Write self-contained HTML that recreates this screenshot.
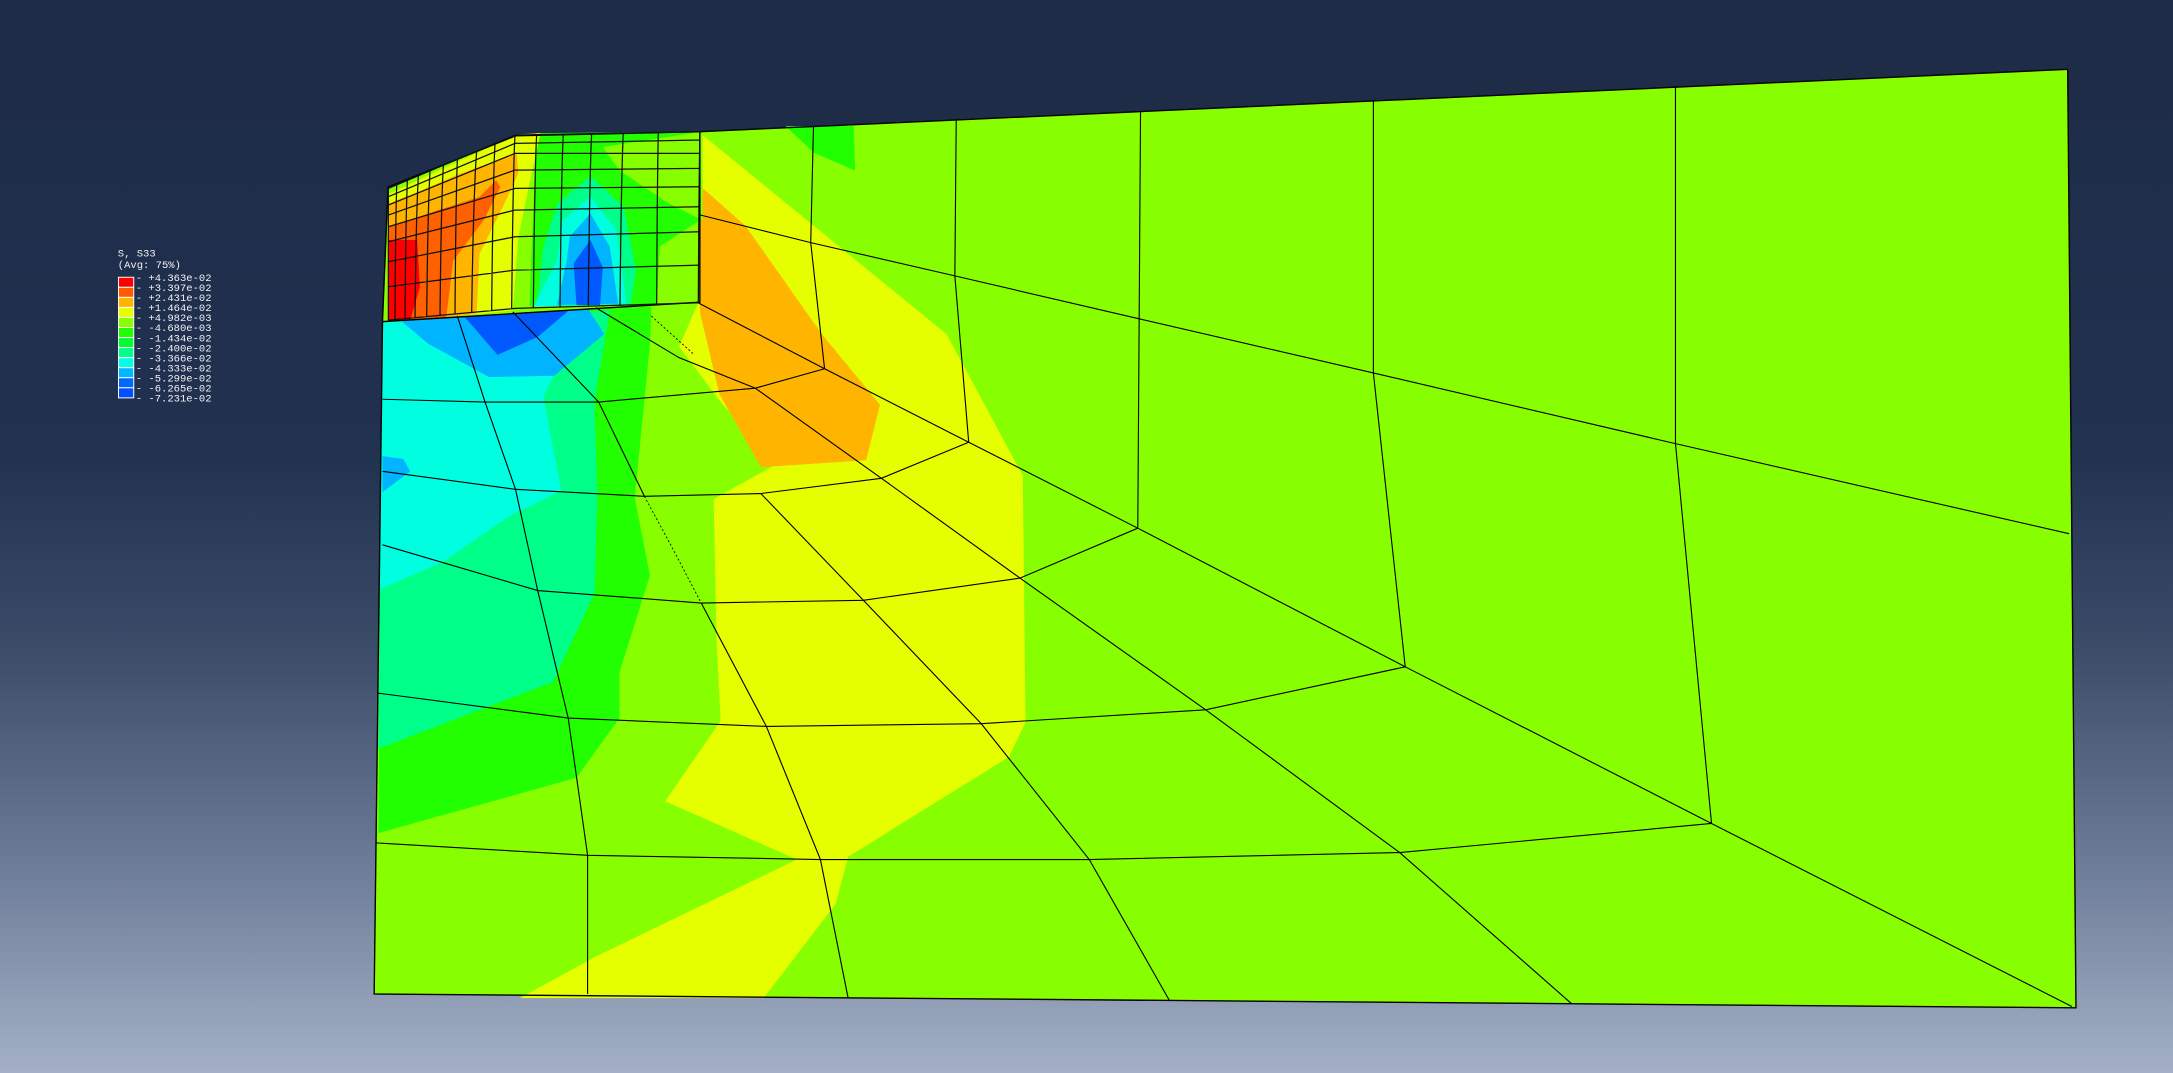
<!DOCTYPE html>
<html><head><meta charset="utf-8">
<style>
html,body{margin:0;padding:0;width:2173px;height:1073px;overflow:hidden;}
body{background:linear-gradient(to bottom,#1d2b46 0%,#213150 42%,#3a4b68 60%,#6b7a96 80%,#a3b0c6 100%);}
svg{display:block;}
text{font-family:"Liberation Mono","DejaVu Sans Mono",monospace;fill:#f2f2f2;font-size:7.6px;}
</style></head><body>
<svg id="s" width="2173" height="1073" viewBox="0 0 1568 774" preserveAspectRatio="none" xmlns="http://www.w3.org/2000/svg">
<!-- body -->
<polygon points="270,717 276,232 280,135 372,98 505,95 1492,50 1498,727" fill="#88ff00"/>
<polygon points="567,91 616,91 617,123 587,110" fill="#22ff00"/>
<!-- yellow -->
<polygon points="504,95 683,241 738,343 740,521 728,546 612,618 603,652 551,720 375,720 430,690 575,620 480,578 520,520 517,460 515,360 560,335 520,290 490,250 504,218" fill="#e6ff00"/>
<polygon points="504,133 538,163 593,241 635,292 625,332 549,337 519,284 505,225" fill="#ffb400"/>
<!-- left lower colours -->
<polygon points="276,232 470,221 469,248 458,359 469,415 447,485 447,518 416,561 273,601" fill="#22ff00"/>
<polygon points="276,232 440,224 429,289 431,359 429,428 399,492 273,540" fill="#00ff88"/>
<polygon points="276,232 425,221 392,286 405,354 368,372 320,405 274,425" fill="#00ffe0"/>
<polygon points="300,228 422,219 436,241 400,271 353,272 309,248 290,232" fill="#00b4ff"/>
<polygon points="276,329 291,331 296,340 276,355" fill="#00b4ff"/>
<polygon points="333,226 414,221 388,243 359,256" fill="#0058ff"/>
<!-- fine region colours -->
<polygon points="280,135 372,98 505,95 504,218 276,232" fill="#88ff00"/>
<polygon points="387,96 507,95 505,159 476,178 474,219 382,221" fill="#22ff00"/>
<polygon points="435,106 507,95 507,159 483,147 447,123" fill="#88ff00"/>
<polygon points="280,140 373,97 390,96 384,123 374,171 370,224 300,231" fill="#e6ff00"/>
<polygon points="280,147 303,138 330,126 358,116 373,111 374,125 363,149 346,183 344,226 325,229 280,231" fill="#ffb400"/>
<polygon points="280,164 315,152 346,142 358,130 361,135 349,159 327,188 322,229 280,231" fill="#ff6000"/>
<polygon points="280,173 301,173 303,207 296,231 280,231" fill="#ff0000"/>
<polygon points="402,147 426,127 450,149 459,195 455,220 387,221 392,178" fill="#00ff88"/>
<polygon points="406,159 426,142 445,166 452,219 385,221 402,188" fill="#00ffe0"/>
<polygon points="411,171 426,154 440,178 446,219 402,220 409,188" fill="#00b4ff"/>
<polygon points="414,190 426,173 435,193 433,220 416,220" fill="#0058ff"/>

<g id="mesh" fill="none" stroke="#000" stroke-width="0.8">
<polyline points="503,218 595,266 699,319 821,381 1014,481 1235,594 1495,726"/>
<polyline points="505,155 585,175 689,199 822,230 991,269 1209,320 1493,385"/>
<polyline points="587,91 585,175 595,266"/>
<polyline points="690,86 689,199 699,319"/>
<polyline points="823,80 822,230 821,381"/>
<polyline points="991,72 991,269 1014,481"/>
<polyline points="1209,62 1209,320 1235,594"/>
<polyline points="545,280 595,266"/>
<polyline points="549,356 636,345 699,319"/>
<polyline points="506,435 623,433 736,417 821,381"/>
<polyline points="553,524 708,522 870,512 1014,481"/>
<polyline points="592,620 786,620 1010,615 1235,594"/>
<polyline points="545,280 636,345 736,417 870,512 1010,615 1134,724"/>
<polyline points="549,356 623,433 708,522 786,620 844,722"/>
<polyline points="506,435 553,524 592,620 612,720"/>
<polyline points="276,288 350,290 432,290 545,280"/>
<polyline points="276,340 372,353 465,358 549,356"/>
<polyline points="276,393 388,426 506,435"/>
<polyline points="273,500 410,518 553,524"/>
<polyline points="271,608 424,617 592,620"/>
<polyline points="330,228 350,290 372,353 388,426 410,518 424,617 424,717"/>
<polyline points="370,225 432,290 465,358"/>
<polyline points="430,222 490,258 545,280"/>
<polyline points="470,228 500,255" stroke-dasharray="1.5,1.5" stroke-width="0.6"/>
<polyline points="465,358 485,395 506,435" stroke-dasharray="1.5,1.5" stroke-width="0.6"/>
<polygon points="270,717 276,232 280,135 372,98 505,95 1492,50 1498,727" stroke-width="1"/>
<polyline points="276,232 505,218 505,95" stroke-width="1"/>
</g>
<g id="fine" fill="none" stroke="#111" stroke-width="0.9"></g>

<!-- legend -->
<text x="85" y="185">S, S33</text>
<text x="85" y="193.5">(Avg: 75%)</text>
<g stroke="#fff" stroke-width="0.7">
<rect x="85.5" y="200" width="11" height="7.25" fill="#ff0000"/>
<rect x="85.5" y="207.25" width="11" height="7.25" fill="#ff5a00"/>
<rect x="85.5" y="214.5" width="11" height="7.25" fill="#ffb400"/>
<rect x="85.5" y="221.75" width="11" height="7.25" fill="#e6ff00"/>
<rect x="85.5" y="229" width="11" height="7.25" fill="#88ff00"/>
<rect x="85.5" y="236.25" width="11" height="7.25" fill="#22ff00"/>
<rect x="85.5" y="243.5" width="11" height="7.25" fill="#00ff30"/>
<rect x="85.5" y="250.75" width="11" height="7.25" fill="#00ff8c"/>
<rect x="85.5" y="258" width="11" height="7.25" fill="#00ffe6"/>
<rect x="85.5" y="265.25" width="11" height="7.25" fill="#00b8ff"/>
<rect x="85.5" y="272.5" width="11" height="7.25" fill="#0068ff"/>
<rect x="85.5" y="279.75" width="11" height="7.25" fill="#0050ff"/>
</g>
<g>
<text x="98" y="202.7">- +4.363e-02</text>
<text x="98" y="209.9">- +3.397e-02</text>
<text x="98" y="217.2">- +2.431e-02</text>
<text x="98" y="224.4">- +1.464e-02</text>
<text x="98" y="231.7">- +4.982e-03</text>
<text x="98" y="238.9">- -4.680e-03</text>
<text x="98" y="246.2">- -1.434e-02</text>
<text x="98" y="253.4">- -2.400e-02</text>
<text x="98" y="260.7">- -3.366e-02</text>
<text x="98" y="267.9">- -4.333e-02</text>
<text x="98" y="275.2">- -5.299e-02</text>
<text x="98" y="282.4">- -6.265e-02</text>
<text x="98" y="289.7">- -7.231e-02</text>
</g>
</svg>
<script>
(function(){
var X=function(z){return 267+0.2405*z},Y=function(z){return 86.6+0.2405*z};
var L=[205,230,255,285,320,365,425,500,600],M=[45,70,100,150,205,270,350,450,565],R=[35,60,100,145,200,260,335,435,548];
var T=[55,80,112,145,180,220,262,320,375,435,500,580,665,760,865,990];
var B=[55,75,105,135,170,210,255,305,365,425,490,570,655,750,860,985];
function rowY(i,zx){ if(zx<=435){var t=(zx-55)/380;return L[i]+(M[i]-L[i])*t;} var t2=(zx-435)/555;return M[i]+(R[i]-M[i])*t2;}
var g=document.getElementById('fine'),ns='http://www.w3.org/2000/svg',s='';
for(var i=0;i<9;i++){s+='M'+X(55)+','+Y(L[i])+'L'+X(435)+','+Y(M[i])+'L'+X(990)+','+Y(R[i]);}
for(var j=0;j<T.length;j++){for(var i=0;i<9;i++){var zx=T[j]+(B[j]-T[j])*i/8;s+=(i?'L':'M')+X(zx).toFixed(2)+','+Y(rowY(i,zx)).toFixed(2);}}
var p=document.createElementNS(ns,'path');p.setAttribute('d',s);g.appendChild(p);
})();
</script>
</body></html>
